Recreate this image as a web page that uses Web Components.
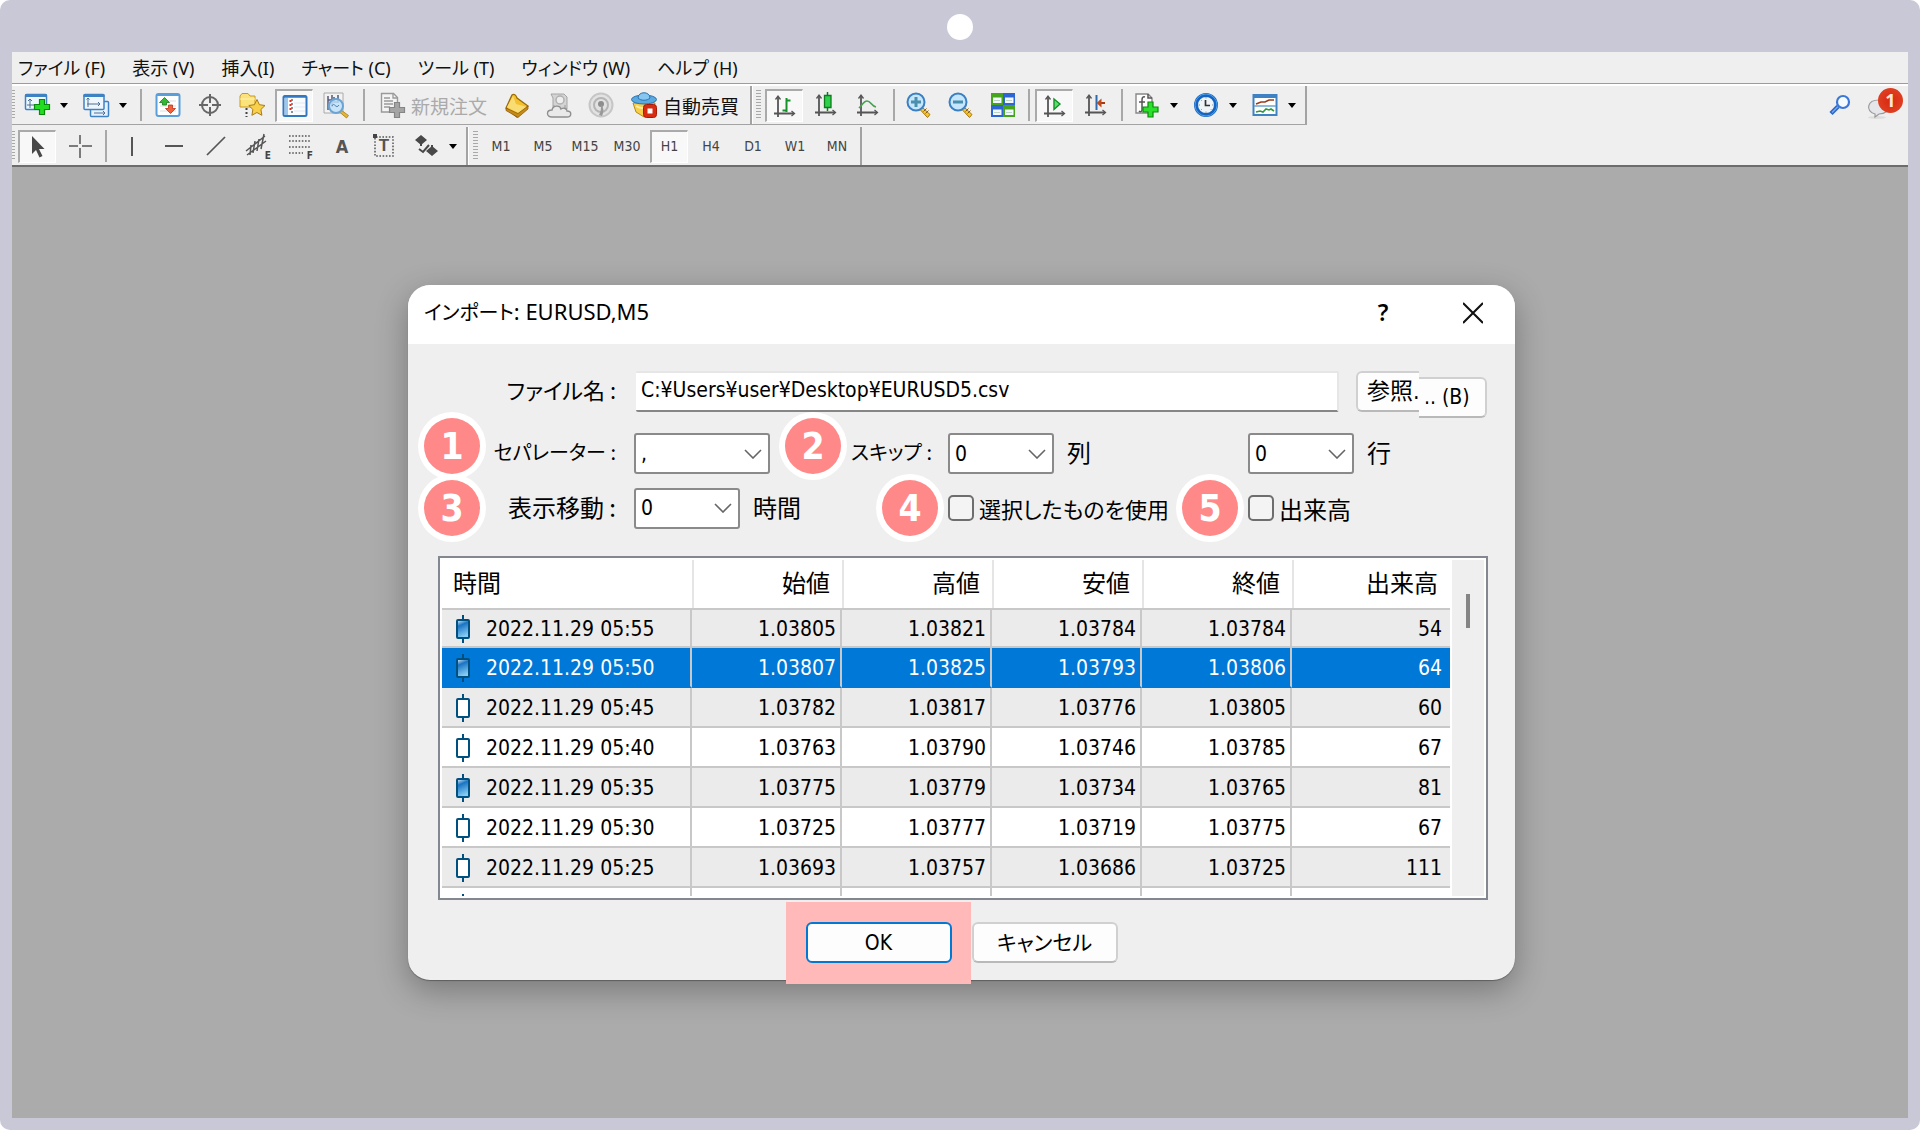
<!DOCTYPE html>
<html lang="ja">
<head>
<meta charset="utf-8">
<title>インポート: EURUSD,M5</title>
<style>
  html, body { margin: 0; background: #fff; }
  body { font-family: "Noto Sans", "Noto Sans CJK JP", sans-serif; font-size: 19px; color: #111; }
</style>
</head>
<body>
<app-frame>
  <menu-bar></menu-bar>
  <main-toolbar></main-toolbar>
  <line-toolbar></line-toolbar>
  <import-dialog slot="workspace"></import-dialog>
</app-frame>

<script>
const define = (name, html, after) => customElements.define(name, class extends HTMLElement {
  connectedCallback() {
    if (this.shadowRoot) return;
    this.attachShadow({ mode: 'open' }).innerHTML = html;
    if (after) after(this.shadowRoot, this);
  }
});

/* ---------- icons, all on a 26 x 26 grid ---------- */
const axes = '<path d="M6 4v20M2 20.500h20" stroke="#555" stroke-width="1.800" fill="none"/><path d="M3.500 6.500 6 3l2.500 3.500M19.500 18l3 2.500-3 2.500" fill="none" stroke="#555" stroke-width="1.300"/>';
const plus = (x, y, a, b) => `<path transform="translate(${x} ${y})" d="M5 0h5v5h5v5h-5v5H5v-5H0V5h5z" fill="${a}" stroke="${b}" stroke-width="1.200"/>`;
const lens = s => `<path d="m16 15 8 7.500-2.500 3L14 17.500z" fill="#f5c52c" stroke="#a87410"/><path d="m17.500 19.500 3-3m-1 5 3-3" stroke="#8c5a08"/><circle cx="10" cy="10" r="8.500" fill="#c5e6fb" stroke="#3b80c4" stroke-width="2"/><path d="M5 10h10${s}" stroke="#4a8fae" stroke-width="3"/>`;
const ICONS = {
  newChart: '<rect x="1.500" y="2.500" width="21" height="15" rx="1" fill="#eef7ff" stroke="#3f82c4" stroke-width="1.500"/><path d="M1 2.500h22v2.500H1z" fill="#3f82c4"/><path d="M6 7v9M4 9l2-2 2 2M3 13h10" stroke="#4e6f8f" fill="none"/>' + plus(10.5, 7.5, '#22dd22', '#0a8a0a'),
  profiles: '<rect x="7.500" y="9.500" width="18" height="15" rx="1" fill="#e6f3ff" stroke="#3f82c4" stroke-width="1.500"/><rect x="1" y="2.500" width="20" height="15" rx="1" fill="#eef7ff" stroke="#3f82c4" stroke-width="1.500"/><path d="M.5 2.500h21V5H.5z" fill="#3f82c4"/><path d="M5 6v9M3.500 7.500 5 6l1.500 1.500M4 12h13m-2-2 2 2-2 2M11 21h11m-2-2 2 2-2 2" stroke="#4e6f8f" fill="none"/>',
  market: '<rect x="1.500" y="2" width="23" height="22" rx="2" fill="#fff" stroke="#5a9fdc" stroke-width="2"/><path d="M2 3h22" stroke="#5a9fdc" stroke-width="2"/><path d="M5 9h16M5 14h16M5 19h16" stroke="#ddd"/><path d="m9.500 5.500 5 5h-3V13h-4v-2.500h-3z" fill="#34b834" stroke="#16801b" stroke-width=".8"/><path d="m15.500 21.500-5-5h3V13h4v3.500h3z" fill="#f2603a" stroke="#c22f14" stroke-width=".8"/>',
  cross: '<circle cx="13" cy="13" r="8" fill="none" stroke="#666" stroke-width="2"/><path d="M13 2v9m0 4v9M2 13h9m4 0h9" stroke="#666" stroke-width="2"/>',
  folder: '<path d="M1 4 3 1.500h6l2 2.500h5V15H1z" fill="#fbe27a" stroke="#c99a22"/><path d="M1 7h15" stroke="#fff3b8"/><path d="M7.500 16v9" stroke="#444" stroke-width="2" stroke-dasharray="2 2"/><path d="m18 7.500 2.400 5.200 5.600.8-4.100 4 1 5.800-5-2.800-5 2.800 1-5.800-4.100-4 5.700-.8z" fill="#f8d04a" stroke="#a97b1b"/>',
  navigator: '<rect x="1.500" y="3" width="23" height="20" rx="1.500" fill="#f8fcff" stroke="#3278c0" stroke-width="2"/><path d="M2 3.500h22" stroke="#3278c0" stroke-width="2.500"/><path d="M3 5h3v17H3z" fill="#9cc8ee"/><path d="M10 6v16" stroke="#222" stroke-dasharray="2 2"/><path d="M8.500 7v2m0 2v2m0 2v2" stroke="#e03020" stroke-width="2"/><path d="M12 10h11M12 14h11M12 18h11" stroke="#e1e8ee"/>',
  tester: '<path d="M1 1h19v20H1z" fill="#f3f3f3" stroke="#aaa"/><path d="M5 4v14M9 3v12M15 3v8M5 8h4m2-3v5h4" stroke="#557" stroke-width="1.500" fill="none"/><path d="m18 18 7.500 5.500-2 2.500-7-6z" fill="#e8b530" stroke="#9a7010" stroke-width=".7"/><circle cx="13" cy="14" r="7" fill="#bfe1f8" fill-opacity=".85" stroke="#69a4d4" stroke-width="2"/><path d="M9 14c2-5 4 4 7-1" fill="none" stroke="#4b83b5"/>',
  order: '<path d="M2.500 1.500h12l4 4V20h-16z" fill="#f4f4f4" stroke="#999" stroke-width="1.400"/><path d="M14 2v4h4M5 6h6M5 9h9M5 12h9M5 15h6" stroke="#999" stroke-width="1.300" fill="none"/>' + plus(10.5, 10.5, '#a5a5a5', '#858585'),
  book: '<path d="M2 16 8 3c2-1.500 4 0 5 3l11 8-11 11z" fill="#f3c02e" stroke="#9a6a0c" stroke-width="1.300"/><path d="m9 4 3 8 11 3-9 6L3 15z" fill="#f9dc74"/><path d="m2 16 12 5.500 10-7.500v3l-10 8.500L2 18.500z" fill="#c58a14" stroke="#85540a" stroke-width=".7"/>',
  cloud: '<path d="M5 2h13l3 3v12H7V6z" fill="#d4d4d4" stroke="#a5a5a5"/><circle cx="14" cy="8" r="4" fill="#eee" stroke="#b0b0b0" stroke-width="1.500"/><path d="M8 13v5m11-5v5" stroke="#999"/><path d="M6 25c-6 0-6-7 0-7 1-5 8-5 9-1 3-2 6 0 6 2 5 0 5 6 0 6z" fill="#e9e9e9" stroke="#8f8f8f" stroke-width="1.400"/>',
  signal: '<circle cx="13" cy="13" r="11.500" fill="#e2e2e2" stroke="#c6c6c6" stroke-width="2"/><circle cx="13" cy="13" r="7" fill="none" stroke="#b5b5b5" stroke-width="2"/><circle cx="13" cy="12" r="3" fill="#8d8d8d"/><path d="M13 12c3 4 3 8 1 12l-3-1c2-3 2-7 2-11" fill="#999"/>',
  robot: '<path d="m2 11 3 9 8 5 9-5 2-9z" fill="#f8cf4a" stroke="#b98a17"/><path d="M5 14c4 3 12 3 16 0" stroke="#fff0a8" stroke-width="2" fill="none"/><ellipse cx="13" cy="7.500" rx="12.500" ry="4.500" fill="#5aa9e0" stroke="#2a75b0"/><path d="M7 6c0-7 12-7 12 0-3 3-9 3-12 0" fill="#86c6ef" stroke="#2a75b0"/><rect x="12.500" y="12.500" width="13" height="13" rx="3" fill="#d92a12" stroke="#a81a08"/><path d="M16.500 16.500h5v5h-5z" fill="#fff"/>',
  bars: axes + '<path d="M14.500 5v14M10.500 17.500h4M14.500 7.500h4" stroke="#15932a" stroke-width="2" fill="none"/>',
  candle: axes + '<path d="M14.500 0v19" stroke="#0d7a1d" stroke-width="1.500"/><path d="M11.500 3.500h6.500v12h-6.500z" fill="#2ed04a" stroke="#0d7a1d" stroke-width="1.300"/>',
  line: axes + '<path d="M4 16c3-3 5-7 8-7 4 0 4 5 9 6" stroke="#48a050" stroke-width="1.700" fill="none"/>',
  zoomIn: lens('M10 5v10'), zoomOut: lens(''),
  tiles: '<path d="M1 1h12v12H1zM13 13h12v12H13z" fill="#47a51d"/><path d="M13 1h12v12H13zM1 13h12v12H1z" fill="#2d66d2"/><path d="M3 5.500h8.500V11H3zM15 5.500h8.500V11H15zM3 17.500h8.500V23H3zM15 17.500h8.500V23H15z" fill="#f3f8ff"/><path d="M4 8.500h6M16 8.500h6M4 20.500h6M16 20.500h6" stroke="#bcd6c4"/>',
  scroll: axes + '<path d="m12 6 6 5-6 5.500z" fill="#5de06b" stroke="#13902a" stroke-width="1.400"/>',
  shift: axes + '<path d="M13.500 3v15" stroke="#2b6cb0" stroke-width="2"/><path d="M22 11h-5" stroke="#a33a12" stroke-width="2"/><path d="m18.500 6.500-5 4.500 5 4.500z" fill="#c04a1c"/>',
  indicator: '<path d="M2 2h12l4 4v15H2z" fill="#fdfdfd" stroke="#888" stroke-width="1.400"/><path d="M14 2v4h4M11 5C8 4 8 7 8 9v9c0 2-2 2-3 1M5 10h6" stroke="#555" stroke-width="1.500" fill="none"/>' + plus(9, 10, '#2be02b', '#0a8a0a'),
  clock: '<circle cx="13" cy="13" r="10" fill="#eef4f8" stroke="#1565c0" stroke-width="4"/><circle cx="13" cy="13" r="11" fill="none" stroke="#5fb0f0" stroke-width=".8"/><path d="M12.500 8v5.500H17" stroke="#333" stroke-width="1.700" fill="none"/><path d="M13 5v1.500M13 19.500V21M5.500 13H7m12 0h1.500M8 8l.8.800M8 18l.8-.8m9 0 .8.800" stroke="#89a"/>',
  template: '<rect x="1.500" y="3" width="23" height="20" fill="#fff" stroke="#3f82c4" stroke-width="2"/><path d="M1 2.500h24v3.500H1z" fill="#3f82c4"/><path d="M2 14h22" stroke="#6ea3d4" stroke-width="1.500"/><path d="m4 12 5-2 4 0 4-2h5" stroke="#9a3b1c" stroke-width="1.600" fill="none"/><path d="m4 20 4-1 3 1 3-3 3 1 2-1 3 2" stroke="#2c9a3a" stroke-width="1.600" fill="none"/>',
  pointer: '<path d="M7 2v18l4-4 3.500 7.500 3-1.500L14 15h5.500z" fill="#484848"/>',
  hair: '<path d="M14 2v9m0 4v10M3 13h9m4 0h10" stroke="#555" stroke-width="1.500"/>',
  vline: '<path d="M13 4v19" stroke="#555" stroke-width="2"/>',
  hline: '<path d="M4 13h18" stroke="#555" stroke-width="2"/>',
  trend: '<path d="M4 22 22 4" stroke="#555" stroke-width="1.700"/>',
  channel: '<path d="M1 18 20 3M2 22 21 8M6 12l-1 10M10 8 8 20M14 6l-2 12M19 1l-3 15" stroke="#555" stroke-width="1.500"/>',
  fibo: '<path d="M2 3h21M2 8h21M2 14h21M2 20h14" stroke="#555" stroke-width="1.600" stroke-dasharray="1.600 1.600"/>',
  textLabel: '<path d="M5 4h17v19H4V5" fill="none" stroke="#555" stroke-width="1.500" stroke-dasharray="1.600 1.600"/><path d="M2 1h4v4H2z" fill="#444"/>',
  shapes: '<path d="m8 2 6 5-6 5-6-5zM19 13l6 5-6 5-6-5z" fill="#484848"/><path d="M8 7v6m11-1v6M6 16l4 3 6-7" stroke="#484848" stroke-width="2" fill="none"/>'
};

define('app-icon', '', (root, el) => {
  root.innerHTML = `<style>:host{display:block;width:26px;height:26px;flex:none}svg{display:block;overflow:visible}</style>
    <svg width="26" height="26" viewBox="0 0 26 26" aria-hidden="true">${ICONS[el.getAttribute('name')] || ''}</svg>`;
});

define('tool-button', `<style>
  :host { display: flex; align-items: center; }
  button { all: unset; box-sizing: border-box; position: relative; min-width: 38px; height: 33px; margin: 0 2px; padding: 0 6px;
    display: flex; align-items: center; justify-content: center; gap: 6px;
    font: 19px/33px "Noto Sans CJK JP", sans-serif; color: inherit; white-space: nowrap; }
  :host([text]) button { padding: 0 7px; }
  :host([narrow]) button { padding: 0; font: 14px/33px "DejaVu Sans Condensed", "DejaVu Sans", sans-serif; color: #444; }
  :host([pressed]) button { background: #f8f8f8; border: 1px solid #fff; border-top: 2px solid #aaa; border-left: 2px solid #aaa; }
  .sub { position: absolute; right: 6px; bottom: 1px; font: bold 10px/12px "DejaVu Sans Condensed", sans-serif; color: #444; }
  :host button.drop { width: 17px; padding: 0; margin: 0; min-width: 0; justify-content: flex-start; }
  .drop i { margin-left: 2px; border: 4px solid transparent; border-top: 5px solid #000; border-bottom: 0; }
</style><button type="button" class="main"><slot></slot></button>`, (root, el) => {
  const b = root.querySelector('.main');
  const label = el.getAttribute('label');
  if (label) b.setAttribute('aria-label', label);
  if (el.hasAttribute('sub')) b.insertAdjacentHTML('beforeend', `<span class="sub">${el.getAttribute('sub')}</span>`);
  if (el.hasAttribute('drop')) b.insertAdjacentHTML('afterend', '<button type="button" class="drop" aria-label="メニュー"><i></i></button>');
});

define('tool-sep', `<style>:host{display:block;width:var(--w,11px);flex:none}i{display:block;width:2px;height:32px;margin:0 auto;background:#a8a8a8}</style><i></i>`);
define('tool-grip', `<style>:host{display:block;flex:none;width:5px;height:30px;background:repeating-linear-gradient(#a8a8a8 0 1px,#efefef 1px 3px)}</style>`);

define('app-frame', `<style>
  :host { display: flex; flex-direction: column; box-sizing: border-box; min-height: 100vh; padding: 0 12px 12px; background: #c8c8d6; border-radius: 10px; }
  .camera { display: flex; justify-content: center; align-items: center; height: 52px; }
  .camera i { width: 26px; height: 26px; margin-top: 2px; border-radius: 50%; background: #fff; }
  header { background: #efefef; border-bottom: 2px solid #6c6c6c; }
  main { flex: 1; background: #ababab; padding: 118px 20px 0 23px; display: flex; justify-content: center; align-items: flex-start; }
</style>
<div class="camera"><i></i></div>
<header><slot></slot></header>
<main><slot name="workspace"></slot></main>`);

define('menu-bar', `<style>
  :host { display: block; border-bottom: 1px solid #9d9d9d; }
  nav { display: flex; gap: 27px; height: 31px; padding: 0 6px; }
  a { font-size: 18px; line-height: 33px; color: #111; text-decoration: none; white-space: nowrap; font-feature-settings: "palt"; }
</style>
<nav><a href="#">ファイル (F)</a><a href="#">表示 (V)</a><a href="#">挿入(I)</a><a href="#">チャート (C)</a><a href="#">ツール (T)</a><a href="#">ウィンドウ (W)</a><a href="#">ヘルプ (H)</a></nav>`);

const barStyle = `
  :host { display: flex; align-items: flex-start; justify-content: space-between; }
  .bar { display: flex; align-items: stretch; }
  .group { display: flex; align-items: center; border-right: 2px solid #a3a3a3; padding-right: 2px; }
  .group + .group { border-left: 1px solid #fff; }
  tool-grip { margin-right: 2px; }
  .group:first-child tool-grip { width: 3px; margin-right: 1px; }`;

define('main-toolbar', `<style>${barStyle}
  .bar { border-top: 2px solid #fff; border-bottom: 1px solid #a3a3a3; height: 38px; }
  :host { box-shadow: inset 0 2px #fff; }
  .group:first-child tool-sep { --w: 13px; }
  .group + .group { padding-left: 3px; }
  .group + .group tool-sep { --w: 9px; }
  .off { color: #aaa; }
  .right { display: flex; align-items: flex-end; gap: 18px; box-sizing: border-box; height: 38px; padding: 0 5px 3px; }
  .right button { all: unset; display: block; position: relative; height: 26px; }
  .right svg { display: block; overflow: visible; }
  .count { position: absolute; right: 0; top: -5px; width: 25px; height: 25px; border-radius: 50%; background: radial-gradient(#d8280e,#e2472a); color: #ffe3de; font: bold 18px/25px "Noto Sans", sans-serif; text-align: center; }
</style>
<div class="bar">
  <div class="group"><tool-grip></tool-grip>
    <tool-button drop label="新規チャート"><app-icon name="newChart"></app-icon></tool-button>
    <tool-button drop label="表示設定"><app-icon name="profiles"></app-icon></tool-button>
    <tool-sep></tool-sep>
    <tool-button label="気配値"><app-icon name="market"></app-icon></tool-button>
    <tool-button label="データウィンドウ"><app-icon name="cross"></app-icon></tool-button>
    <tool-button label="ナビゲーター"><app-icon name="folder"></app-icon></tool-button>
    <tool-button pressed narrow label="ターミナル"><app-icon name="navigator"></app-icon></tool-button>
    <tool-button label="ストラテジーテスター"><app-icon name="tester"></app-icon></tool-button>
    <tool-sep></tool-sep>
    <tool-button text class="off"><app-icon name="order"></app-icon>新規注文</tool-button>
    <tool-button label="MetaEditor"><app-icon name="book"></app-icon></tool-button>
    <tool-button label="VPS"><app-icon name="cloud"></app-icon></tool-button>
    <tool-button label="シグナル"><app-icon name="signal"></app-icon></tool-button>
    <tool-button text><app-icon name="robot"></app-icon>自動売買</tool-button>
  </div>
  <div class="group"><tool-grip></tool-grip>
    <tool-button pressed narrow label="バーチャート"><app-icon name="bars"></app-icon></tool-button>
    <tool-button label="ローソク足"><app-icon name="candle"></app-icon></tool-button>
    <tool-button label="ラインチャート"><app-icon name="line"></app-icon></tool-button>
    <tool-sep></tool-sep>
    <tool-button label="拡大"><app-icon name="zoomIn"></app-icon></tool-button>
    <tool-button label="縮小"><app-icon name="zoomOut"></app-icon></tool-button>
    <tool-button label="整列"><app-icon name="tiles"></app-icon></tool-button>
    <tool-sep></tool-sep>
    <tool-button pressed narrow label="自動スクロール"><app-icon name="scroll"></app-icon></tool-button>
    <tool-button label="チャートシフト"><app-icon name="shift"></app-icon></tool-button>
    <tool-sep></tool-sep>
    <tool-button drop label="インディケータ"><app-icon name="indicator"></app-icon></tool-button>
    <tool-button drop label="時間足設定"><app-icon name="clock"></app-icon></tool-button>
    <tool-button drop label="定型チャート"><app-icon name="template"></app-icon></tool-button>
  </div>
</div>
<div class="right">
  <button type="button" aria-label="検索"><svg width="22" height="26" viewBox="0 0 22 26"><path d="m9 13.500-7 7" stroke="#2b66c8" stroke-width="4.500"/><path d="m9 13.500-6 6" stroke="#78a9ee" stroke-width="1.500"/><circle cx="14" cy="9" r="6" fill="#f5faff" stroke="#3a78d8" stroke-width="2.200"/></svg></button>
  <button type="button" aria-label="通知"><svg width="34" height="26" viewBox="0 0 34 26"><ellipse cx="8" cy="24.500" rx="9" ry="1.500" fill="#ddd"/><path d="M10 7c13 0 13 14 0 14l-4 3v-3C-4 18-2 7 10 7" fill="#e4e6ea" stroke="#9a9a9a" stroke-width="1.200"/></svg><span class="count">1</span></button>
</div>`);

define('line-toolbar', `<style>${barStyle}
  :host { border-top: 2px solid transparent; }
  .bar { height: 38px; }
  .group + .group { padding-left: 4px; }
  .a { font: bold 18px/33px "DejaVu Sans Condensed", sans-serif; color: #555; }
  .t { display: grid; place-items: center; font: bold 17px/26px "Liberation Sans", sans-serif; color: #555; }
  .t > * { grid-area: 1 / 1; }
</style>
<div class="bar">
  <div class="group"><tool-grip></tool-grip>
    <tool-button narrow pressed label="カーソル"><app-icon name="pointer"></app-icon></tool-button>
    <tool-button narrow label="十字カーソル"><app-icon name="hair"></app-icon></tool-button>
    <tool-sep></tool-sep>
    <tool-button narrow label="垂直線"><app-icon name="vline"></app-icon></tool-button>
    <tool-button narrow label="水平線"><app-icon name="hline"></app-icon></tool-button>
    <tool-button narrow label="トレンドライン"><app-icon name="trend"></app-icon></tool-button>
    <tool-button narrow sub="E"><app-icon name="channel"></app-icon></tool-button>
    <tool-button narrow sub="F"><app-icon name="fibo"></app-icon></tool-button>
    <tool-button narrow><span class="a">A</span></tool-button>
    <tool-button narrow><span class="t"><app-icon name="textLabel"></app-icon><span>T</span></span></tool-button>
    <tool-button narrow drop label="図形"><app-icon name="shapes"></app-icon></tool-button>
  </div>
  <div class="group"><tool-grip></tool-grip>
    <tool-button narrow>M1</tool-button><tool-button narrow>M5</tool-button><tool-button narrow>M15</tool-button><tool-button narrow>M30</tool-button><tool-button narrow pressed>H1</tool-button><tool-button narrow>H4</tool-button><tool-button narrow>D1</tool-button><tool-button narrow>W1</tool-button><tool-button narrow>MN</tool-button>
  </div>
</div>`);

define('number-badge', `<style>
  :host { display: block; flex: none; width: 56px; height: 56px; border-radius: 50%; background: #ff8989; box-shadow: 0 0 0 6px #fff;
    color: #fff; text-align: center; font: bold 37px/57px "DejaVu Sans Condensed", "DejaVu Sans", sans-serif; }
</style><slot></slot>`);

define('combo-box', `<style>
  :host { display: grid; flex: none; width: 106px; height: 41px; }
  :host([wide]) { width: 136px; }
  ::slotted(select), svg { grid-area: 1 / 1; }
  ::slotted(select) { appearance: none; box-sizing: border-box; margin: 0; padding: 0 5px; border: 2px solid #8a8a8a; border-radius: 3px; background: #fff;
    color: #000; font: 21px/36px "DejaVu Sans Condensed", "DejaVu Sans", sans-serif; }
  svg { justify-self: end; align-self: center; margin-right: 8px; pointer-events: none; z-index: 1; }
</style><slot></slot>
<svg width="18" height="10" viewBox="0 0 18 10" aria-hidden="true"><path d="m1 1 8 8 8-8" fill="none" stroke="#666" stroke-width="1.600"/></svg>`);

define('push-button', `<style>
  :host { display: block; position: relative; }
  button { position: relative; box-sizing: border-box; width: 146px; height: 41px; padding: 1px 0 0; border: 2px solid #d0d0d0; border-bottom-color: #b9b9b9; border-radius: 6px; background: #fdfdfd;
    color: #000; font: 21px/36px "DejaVu Sans Condensed", "Noto Sans CJK JP", sans-serif; font-feature-settings: "palt"; display: block; }
  :host([default]) button { border-color: #0078d4; }
  :host([marked])::before { content: ""; position: absolute; inset: -20px -19px -21px -20px; background: #ffb9b9; }
</style><button type="button"><slot></slot></button>`);

const BARS = [
  ['05:55', '1.03805', '1.03821', '1.03784', '1.03784', '54', 1],
  ['05:50', '1.03807', '1.03825', '1.03793', '1.03806', '64', 1],
  ['05:45', '1.03782', '1.03817', '1.03776', '1.03805', '60', 0],
  ['05:40', '1.03763', '1.03790', '1.03746', '1.03785', '67', 0],
  ['05:35', '1.03775', '1.03779', '1.03734', '1.03765', '81', 1],
  ['05:30', '1.03725', '1.03777', '1.03719', '1.03775', '67', 0],
  ['05:25', '1.03693', '1.03757', '1.03686', '1.03725', '111', 0],
];
const candle = full => `<svg width="14" height="28" viewBox="0 0 14 28" aria-hidden="true"><path d="M7 0v5m0 18v5" stroke="#00507f" stroke-width="2"/><rect x="1" y="5" width="12" height="18" rx="1" fill="${full ? 'url(#g)' : '#fff'}" stroke="#00507f" stroke-width="2"/></svg>`;

define('price-table', `<style>
  :host { display: flex; box-sizing: border-box; height: 344px; border: 2px solid #828790; background: #fff; padding: 2px; gap: 2px; }
  .view { flex: 1; overflow: hidden; }
  table { width: 100%; border-collapse: separate; border-spacing: 0; table-layout: fixed; font: 21px/36px "DejaVu Sans Condensed", "DejaVu Sans", sans-serif; color: #000; }
  col { width: 150px; } col.time { width: 250px; } col.vol { width: auto; }
  th { box-sizing: border-box; height: 50px; padding: 0 12px 4px; border-bottom: 2px solid #c8c8c8; text-align: right; font: 24px/44px "Noto Sans CJK JP", sans-serif; background: linear-gradient(#e5e5e5,#e5e5e5) left / 2px 100% no-repeat; }
  th:first-child { text-align: left; background: none; padding-left: 11px; }
  td { box-sizing: border-box; height: 40px; padding: 2px 4px 0 0; text-align: right; border-bottom: 2px solid #c8c8c8; border-right: 2px solid #c8c8c8; }
  td:last-child { border-right: 0; padding-right: 8px; }
  tbody tr:first-child td { height: 38px; line-height: 34px; }
  tbody tr:nth-child(odd) { background: #ebebeb; }
  tbody tr.sel { background: #0078d7; color: #fff; }
  tr.sel td { border-bottom-color: #0078d7; }
  .when { display: flex; align-items: center; gap: 16px; padding-left: 14px; }
  svg { display: block; flex: none; }
  .defs { position: absolute; }
  .scroll { width: 32px; background: #efefef; display: flex; justify-content: center; }
  .scroll i { width: 4px; height: 34px; margin-top: 34px; background: #858585; }
</style>
<svg class="defs" width="0" height="0" aria-hidden="true"><defs><linearGradient id="g" x1="0" y1="0" x2=".3" y2="1"><stop offset="0" stop-color="#e8f4fd"/><stop offset=".35" stop-color="#1a74c4"/><stop offset="1" stop-color="#86cdf3"/></linearGradient></defs></svg>
<div class="view"><table>
  <colgroup><col class="time"><col><col><col><col><col class="vol"></colgroup>
  <thead><tr><th>時間</th><th>始値</th><th>高値</th><th>安値</th><th>終値</th><th>出来高</th></tr></thead>
  <tbody>${BARS.map((r, i) => `<tr${i === 1 ? ' class="sel"' : ''}><td><div class="when">${candle(r[6])}<span>2022.11.29 ${r[0]}</span></div></td>${r.slice(1, 6).map(v => `<td>${v}</td>`).join('')}</tr>`).join('')}
  <tr><td><div class="when">${candle(0)}</div></td><td></td><td></td><td></td><td></td><td></td></tr></tbody>
</table></div>
<div class="scroll"><i></i></div>`);

define('import-dialog', `<style>
  :host { display: flex; flex-direction: column; width: 1107px; box-sizing: border-box; border-radius: 22px; background: #efefef; color: #000;
    box-shadow: 0 10px 32px rgba(0,0,0,.3), 0 1px 1px rgba(0,0,0,.3); }
  header { display: flex; align-items: center; height: 59px; padding: 0 32px 6px 16px; box-sizing: border-box; background: #fff; border-radius: 22px 22px 0 0; }
  h1 { flex: 1; margin: 0; font: 22px/50px "Noto Sans", "Noto Sans CJK JP", sans-serif; font-feature-settings: "palt"; }
  h1 span { font-size: 20px; }
  header button { all: unset; display: block; text-align: center; font: 600 23px/50px "Noto Sans", sans-serif; width: 20px; }
  header button + button { margin-left: 70px; }
  header svg { display: block; }
  form { display: grid; grid-template-columns: 226px 314px 300px 1fr; grid-template-rows: 41px 56px 56px; row-gap: 6px; padding: 27px 28px 0 0; }
  .cell { display: flex; align-items: center; }
  .low { align-items: flex-end; }
  .first { padding: 0 18px 0 16px; justify-content: space-between; }
  .solo { justify-content: flex-end; }
  .wide { grid-column: 2 / 5; }
  label, .unit { padding-bottom: 4px; font: 24px/37px "Noto Sans CJK JP", sans-serif; font-feature-settings: "palt"; white-space: nowrap; }
  .kana { font-size: 20px; }
  .mixed { font-size: 22px; }
  .unit { margin-left: 13px; }
  .push { margin-left: auto; margin-right: 10px; }
  .skip { margin-right: 16px; }
  .file { flex: 1; box-sizing: border-box; min-width: 0; height: 41px; margin-left: 2px; padding: 0 5px 3px; border: 0; border-top: 2px solid #e6e6e6; border-right: 2px solid #e6e6e6; border-bottom: 2px solid #868686; border-radius: 2px; background: #fff; color: #000; font: 21px/34px "DejaVu Sans Condensed", "DejaVu Sans", "Noto Sans CJK JP", sans-serif; }
  .browse { all: unset; display: flex; align-items: flex-start; height: 41px; margin-left: 17px; font: 21px/36px "DejaVu Sans Condensed", "Noto Sans CJK JP", sans-serif; white-space: pre; }
  .browse span { box-sizing: border-box; height: 41px; border: 2px solid #d0d0d0; border-bottom-color: #b9b9b9; background: #fdfdfd; }
  .browse .l { width: 63px; border-right: 0; border-radius: 6px 0 0 6px; padding-left: 9px; font-size: 23px; }
  .browse .r { width: 68px; margin-top: 6px; border-left: 0; border-radius: 0 6px 6px 0; padding-left: 5px; }
  input[type=checkbox] { appearance: none; box-sizing: border-box; width: 26px; height: 26px; margin: 0; border: 2px solid #6e6e6e; border-radius: 5px; background: #f4f4f4; }
  .tick { display: flex; align-items: center; gap: 5px; padding: 0; }
  price-table { margin: 20px 27px 0 30px; }
  footer { display: flex; justify-content: center; gap: 20px; padding: 22px 0 17px; }
</style>
<header><h1><span>インポート</span>: EURUSD,M5</h1>
  <button type="button">?</button>
  <button type="button" aria-label="閉じる"><svg width="20" height="50" viewBox="0 0 20 50"><path d="m0 16 20 20M20 16 0 36" stroke="#111" stroke-width="2"/></svg></button>
</header>
<form>
  <div class="cell first solo"><label class="mixed" for="file">ファイル名 :</label></div>
  <div class="cell wide"><input id="file" class="file" type="text" value="C:¥Users¥user¥Desktop¥EURUSD5.csv">
    <button type="button" class="browse"><span class="l">参照.</span><span class="r">.. (B)</span></button></div>

  <div class="cell low first"><number-badge>1</number-badge><label class="kana" for="sep">セパレーター :</label></div>
  <div class="cell low"><combo-box wide><select id="sep"><option>,</option></select></combo-box>
    <number-badge class="push">2</number-badge><label class="kana skip" for="col">スキップ :</label></div>
  <div class="cell low"><combo-box><select id="col"><option>0</option></select></combo-box><span class="unit">列</span></div>
  <div class="cell low"><combo-box><select id="row"><option>0</option></select></combo-box><label class="unit" for="row">行</label></div>

  <div class="cell first"><number-badge>3</number-badge><label for="shift">表示移動 :</label></div>
  <div class="cell"><combo-box><select id="shift"><option>0</option></select></combo-box><span class="unit">時間</span><number-badge class="push">4</number-badge></div>
  <div class="cell"><label class="tick mixed"><input type="checkbox">選択したものを使用</label><number-badge class="push">5</number-badge></div>
  <div class="cell"><label class="tick"><input type="checkbox">出来高</label></div>
</form>
<price-table></price-table>
<footer><push-button default marked>OK</push-button><push-button>キャンセル</push-button></footer>`);
</script>
</body>
</html>
